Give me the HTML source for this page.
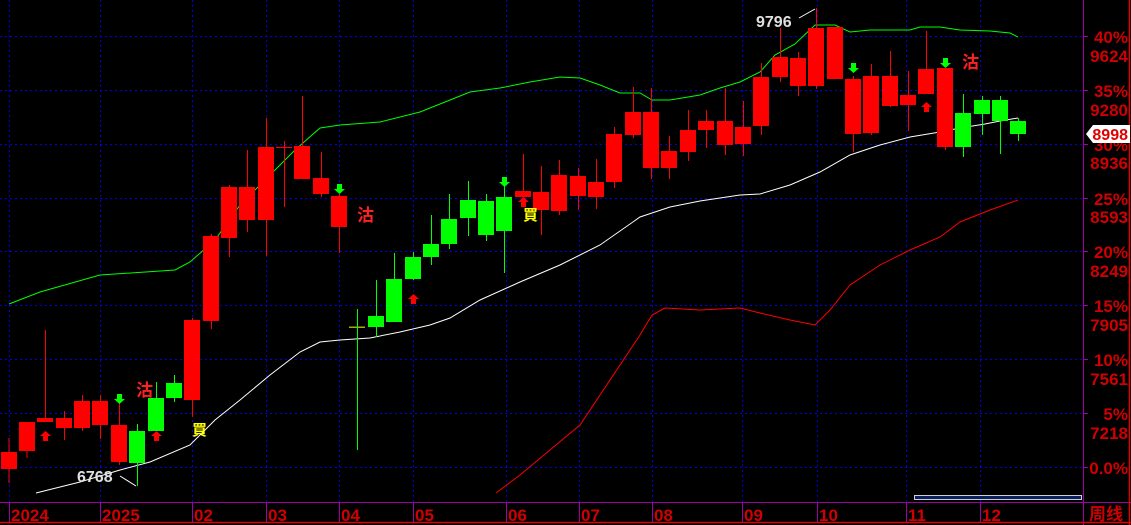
<!DOCTYPE html>
<html><head><meta charset="utf-8"><style>
html,body{margin:0;padding:0;background:#000;width:1131px;height:525px;overflow:hidden}
svg{display:block}
text{font-family:"Liberation Sans","Noto Sans CJK SC",sans-serif;font-weight:bold}
</style></head><body>
<svg width="1131" height="525" viewBox="0 0 1131 525" xmlns="http://www.w3.org/2000/svg">
<rect width="1131" height="525" fill="#000"/>
<g stroke="#0000e0" stroke-width="1" stroke-dasharray="2,3">
<line x1="0" y1="36.5" x2="1083" y2="36.5"/><line x1="0" y1="90.5" x2="1083" y2="90.5"/><line x1="0" y1="144.5" x2="1083" y2="144.5"/><line x1="0" y1="198.5" x2="1083" y2="198.5"/><line x1="0" y1="251.5" x2="1083" y2="251.5"/><line x1="0" y1="305.5" x2="1083" y2="305.5"/><line x1="0" y1="359.5" x2="1083" y2="359.5"/><line x1="0" y1="413.5" x2="1083" y2="413.5"/><line x1="0" y1="467.5" x2="1083" y2="467.5"/>
<line x1="9.5" y1="0" x2="9.5" y2="502"/><line x1="100.5" y1="0" x2="100.5" y2="502"/><line x1="192.5" y1="0" x2="192.5" y2="502"/><line x1="266.5" y1="0" x2="266.5" y2="502"/><line x1="339.5" y1="0" x2="339.5" y2="502"/><line x1="413.5" y1="0" x2="413.5" y2="502"/><line x1="506.5" y1="0" x2="506.5" y2="502"/><line x1="579.5" y1="0" x2="579.5" y2="502"/><line x1="652.5" y1="0" x2="652.5" y2="502"/><line x1="742.5" y1="0" x2="742.5" y2="502"/><line x1="817.5" y1="0" x2="817.5" y2="502"/><line x1="906.5" y1="0" x2="906.5" y2="502"/><line x1="980.5" y1="0" x2="980.5" y2="502"/>
</g>
<polyline fill="none" stroke="#00ff00" stroke-width="1" points="9,304 40,292 100,275 175,270 190,262 215,240 240,205 270,175 295,150 320,128 340,125 380,122 420,112 450,100 470,92 500,88 530,82 560,77 580,78 600,85 620,93 640,93 652,100 670,100 700,95 720,88 740,82 760,72 775,55 795,44 815,25 835,25 850,32 870,30 910,30 920,27 940,27 960,30 990,31 1010,33 1018,37"/>
<polyline fill="none" stroke="#ffffff" stroke-width="1" points="36,493 80,482 120,470 150,462 190,445 215,420 240,400 270,375 300,352 320,342 340,340 370,338 400,332 430,325 450,318 480,300 520,282 560,265 600,245 640,217 670,207 700,201 740,195 760,194 790,185 820,172 850,155 880,145 910,137 940,132 960,128 985,124 1000,121 1018,118"/>
<polyline fill="none" stroke="#ff0000" stroke-width="1" points="496,493 520,475 550,450 580,425 600,395 620,365 640,335 652,315 665,308 700,310 740,308 760,313 790,320 815,325 830,310 850,285 880,265 910,250 940,237 960,222 990,210 1018,200"/>
<g fill="#ff0000" stroke="#ff0000">
<line x1="9" y1="438" x2="9" y2="483"/><rect x="1" y="452" width="16" height="17" stroke="none"/>
<line x1="27" y1="422" x2="27" y2="458"/><rect x="19" y="422" width="16" height="29" stroke="none"/>
<line x1="45.5" y1="330" x2="45.5" y2="422"/><rect x="37" y="418" width="16" height="4" stroke="none"/>
<line x1="64.5" y1="411" x2="64.5" y2="440"/><rect x="56" y="418" width="16" height="10" stroke="none"/>
<line x1="82.5" y1="395" x2="82.5" y2="431"/><rect x="74" y="401" width="16" height="27" stroke="none"/>
<line x1="100.5" y1="395" x2="100.5" y2="439"/><rect x="92" y="401" width="16" height="24" stroke="none"/>
<line x1="119.5" y1="395" x2="119.5" y2="465"/><rect x="111" y="425" width="16" height="37" stroke="none"/>
<line x1="192.5" y1="318" x2="192.5" y2="417"/><rect x="184" y="320" width="16" height="80" stroke="none"/>
<line x1="211.5" y1="234" x2="211.5" y2="329"/><rect x="203" y="236" width="16" height="85" stroke="none"/>
<line x1="229.5" y1="185" x2="229.5" y2="257"/><rect x="221" y="187" width="16" height="51" stroke="none"/>
<line x1="247.5" y1="150" x2="247.5" y2="232"/><rect x="239" y="187" width="16" height="33" stroke="none"/>
<line x1="266.5" y1="118" x2="266.5" y2="256"/><rect x="258" y="147" width="16" height="73" stroke="none"/>
<line x1="284.5" y1="141" x2="284.5" y2="207"/><rect x="276" y="147" width="16" height="1" stroke="none"/>
<line x1="302.5" y1="96" x2="302.5" y2="179"/><rect x="294" y="146" width="16" height="33" stroke="none"/>
<line x1="321.5" y1="152" x2="321.5" y2="197"/><rect x="313" y="178" width="16" height="16" stroke="none"/>
<line x1="339.5" y1="194" x2="339.5" y2="253"/><rect x="331" y="196" width="16" height="31" stroke="none"/>
<rect x="349" y="326" width="16" height="2" stroke="none"/>
<line x1="523.5" y1="154" x2="523.5" y2="198"/><rect x="515" y="191" width="16" height="6" stroke="none"/>
<line x1="541.5" y1="166" x2="541.5" y2="235"/><rect x="533" y="192" width="16" height="18" stroke="none"/>
<line x1="559.5" y1="160" x2="559.5" y2="215"/><rect x="551" y="175" width="16" height="36" stroke="none"/>
<line x1="578.5" y1="168" x2="578.5" y2="210"/><rect x="570" y="176" width="16" height="20" stroke="none"/>
<line x1="596.5" y1="159" x2="596.5" y2="209"/><rect x="588" y="182" width="16" height="15" stroke="none"/>
<line x1="614.5" y1="127" x2="614.5" y2="188"/><rect x="606" y="134" width="16" height="48" stroke="none"/>
<line x1="633.5" y1="87" x2="633.5" y2="138"/><rect x="625" y="112" width="16" height="23" stroke="none"/>
<line x1="651.5" y1="88" x2="651.5" y2="179"/><rect x="643" y="112" width="16" height="56" stroke="none"/>
<line x1="669.5" y1="136" x2="669.5" y2="179"/><rect x="661" y="151" width="16" height="17" stroke="none"/>
<line x1="688.5" y1="110" x2="688.5" y2="161"/><rect x="680" y="130" width="16" height="22" stroke="none"/>
<line x1="706.5" y1="110" x2="706.5" y2="148"/><rect x="698" y="121" width="16" height="9" stroke="none"/>
<line x1="725.5" y1="88" x2="725.5" y2="155"/><rect x="717" y="121" width="16" height="24" stroke="none"/>
<line x1="743.5" y1="101" x2="743.5" y2="156"/><rect x="735" y="127" width="16" height="17" stroke="none"/>
<line x1="761.5" y1="63" x2="761.5" y2="135"/><rect x="753" y="77" width="16" height="49" stroke="none"/>
<line x1="780.5" y1="28" x2="780.5" y2="82"/><rect x="772" y="57" width="16" height="20" stroke="none"/>
<line x1="798.5" y1="52" x2="798.5" y2="96"/><rect x="790" y="58" width="16" height="28" stroke="none"/>
<line x1="816.5" y1="8" x2="816.5" y2="89"/><rect x="808" y="28" width="16" height="58" stroke="none"/>
<line x1="835.5" y1="27" x2="835.5" y2="79"/><rect x="827" y="27" width="16" height="52" stroke="none"/>
<line x1="853.5" y1="76" x2="853.5" y2="152"/><rect x="845" y="79" width="16" height="55" stroke="none"/>
<line x1="871.5" y1="64" x2="871.5" y2="135"/><rect x="863" y="76" width="16" height="57" stroke="none"/>
<line x1="890.5" y1="51" x2="890.5" y2="107"/><rect x="882" y="76" width="16" height="30" stroke="none"/>
<line x1="908.5" y1="71" x2="908.5" y2="131"/><rect x="900" y="95" width="16" height="10" stroke="none"/>
<line x1="926.5" y1="31" x2="926.5" y2="94"/><rect x="918" y="69" width="16" height="25" stroke="none"/>
<line x1="945.5" y1="68" x2="945.5" y2="150"/><rect x="937" y="68" width="16" height="79" stroke="none"/>
</g>
<g fill="#00ff00" stroke="#00ff00">
<line x1="137.5" y1="424" x2="137.5" y2="486"/><rect x="129" y="431" width="16" height="32" stroke="none"/>
<line x1="156.5" y1="382" x2="156.5" y2="431"/><rect x="148" y="398" width="16" height="33" stroke="none"/>
<line x1="174.5" y1="375" x2="174.5" y2="402"/><rect x="166" y="383" width="16" height="15" stroke="none"/>
<line x1="357.5" y1="309" x2="357.5" y2="450"/>
<line x1="376.5" y1="280" x2="376.5" y2="337"/><rect x="368" y="316" width="16" height="11" stroke="none"/>
<line x1="394.5" y1="253" x2="394.5" y2="322"/><rect x="386" y="279" width="16" height="43" stroke="none"/>
<line x1="413.5" y1="252" x2="413.5" y2="280"/><rect x="405" y="257" width="16" height="22" stroke="none"/>
<line x1="431.5" y1="215" x2="431.5" y2="265"/><rect x="423" y="244" width="16" height="13" stroke="none"/>
<line x1="449.5" y1="194" x2="449.5" y2="249"/><rect x="441" y="219" width="16" height="25" stroke="none"/>
<line x1="468.5" y1="181" x2="468.5" y2="236"/><rect x="460" y="200" width="16" height="18" stroke="none"/>
<line x1="486.5" y1="194" x2="486.5" y2="241"/><rect x="478" y="201" width="16" height="34" stroke="none"/>
<line x1="504.5" y1="180" x2="504.5" y2="273"/><rect x="496" y="197" width="16" height="34" stroke="none"/>
<line x1="963.5" y1="94" x2="963.5" y2="157"/><rect x="955" y="113" width="16" height="34" stroke="none"/>
<line x1="982.5" y1="96" x2="982.5" y2="135"/><rect x="974" y="100" width="16" height="14" stroke="none"/>
<line x1="1000.5" y1="96" x2="1000.5" y2="154"/><rect x="992" y="100" width="16" height="21" stroke="none"/>
<line x1="1018.5" y1="118" x2="1018.5" y2="141"/><rect x="1010" y="121" width="16" height="13" stroke="none"/>
</g>
<rect x="349" y="327" width="16" height="1" fill="#00ff00"/>
<g fill="#00ff00">
<path d="M117,394h5v5h3l-5.5,5l-5.5,-5h3z"/><path d="M337,184h5v5h3l-5.5,5l-5.5,-5h3z"/><path d="M502,177h5v5h3l-5.5,5l-5.5,-5h3z"/><path d="M851,63h5v5h3l-5.5,5l-5.5,-5h3z"/><path d="M943,58h5v5h3l-5.5,5l-5.5,-5h3z"/>
</g>
<g fill="#ff0000">
<path d="M43,441h5v-5h3l-5.5,-5l-5.5,5h3z"/><path d="M154,441h5v-5h3l-5.5,-5l-5.5,5h3z"/><path d="M411,304h5v-5h3l-5.5,-5l-5.5,5h3z"/><path d="M521,207h5v-5h3l-5.5,-5l-5.5,5h3z"/><path d="M924,112h5v-5h3l-5.5,-5l-5.5,5h3z"/>
</g>
<g font-size="17" fill="#ff2020">
<text x="136" y="396">沽</text><text x="357" y="221">沽</text><text x="962" y="68">沽</text>
</g>
<g font-size="15" fill="#ffff00"><text x="192" y="435">買</text><text x="523" y="220">買</text></g>
<text x="756" y="27" font-size="16" fill="#e0e0e0">9796</text>
<line x1="799" y1="18" x2="815" y2="9" stroke="#fff" stroke-width="1"/>
<text x="77" y="482" font-size="16" fill="#e0e0e0">6768</text>
<line x1="120" y1="476" x2="136" y2="486" stroke="#fff" stroke-width="1"/>
<rect x="914.5" y="495.5" width="167" height="4" fill="#0a1f60" stroke="#d0d0d0" stroke-width="1"/>
<line x1="1083.5" y1="0" x2="1083.5" y2="525" stroke="#a000a0"/>
<line x1="0" y1="502.5" x2="1131" y2="502.5" stroke="#a000a0"/>
<line x1="0" y1="522.5" x2="1131" y2="522.5" stroke="#e00000" stroke-width="1.5"/>
<line x1="1129.5" y1="0" x2="1129.5" y2="525" stroke="#e00000" stroke-width="1.5"/>
<g stroke="#a000a0">
<line x1="1083" y1="36.5" x2="1088" y2="36.5"/><line x1="1083" y1="90.5" x2="1088" y2="90.5"/><line x1="1083" y1="144.5" x2="1088" y2="144.5"/><line x1="1083" y1="198.5" x2="1088" y2="198.5"/><line x1="1083" y1="251.5" x2="1088" y2="251.5"/><line x1="1083" y1="305.5" x2="1088" y2="305.5"/><line x1="1083" y1="359.5" x2="1088" y2="359.5"/><line x1="1083" y1="413.5" x2="1088" y2="413.5"/><line x1="1083" y1="467.5" x2="1088" y2="467.5"/>
<line x1="9.5" y1="502" x2="9.5" y2="522"/><line x1="100.5" y1="502" x2="100.5" y2="522"/><line x1="192.5" y1="502" x2="192.5" y2="522"/><line x1="266.5" y1="502" x2="266.5" y2="522"/><line x1="339.5" y1="502" x2="339.5" y2="522"/><line x1="413.5" y1="502" x2="413.5" y2="522"/><line x1="506.5" y1="502" x2="506.5" y2="522"/><line x1="579.5" y1="502" x2="579.5" y2="522"/><line x1="652.5" y1="502" x2="652.5" y2="522"/><line x1="742.5" y1="502" x2="742.5" y2="522"/><line x1="817.5" y1="502" x2="817.5" y2="522"/><line x1="906.5" y1="502" x2="906.5" y2="522"/><line x1="980.5" y1="502" x2="980.5" y2="522"/>
</g>
<g font-size="17" fill="#d00000" text-anchor="end">
<text x="1128" y="43">40%</text><text x="1128" y="62">9624</text>
<text x="1128" y="97">35%</text><text x="1128" y="116">9280</text>
<text x="1128" y="151">30%</text><text x="1128" y="169">8936</text>
<text x="1128" y="205">25%</text><text x="1128" y="223">8593</text>
<text x="1128" y="258">20%</text><text x="1128" y="277">8249</text>
<text x="1128" y="312">15%</text><text x="1128" y="331">7905</text>
<text x="1128" y="366">10%</text><text x="1128" y="385">7561</text>
<text x="1128" y="420">5%</text><text x="1128" y="439">7218</text>
<text x="1128" y="474">0.0%</text>
</g>
<path d="M1086,134 L1093,125 H1130 V143 H1093 Z" fill="#fff"/>
<text x="1128" y="140" font-size="16" fill="#e00000" text-anchor="end">8998</text>
<g font-size="17" fill="#d00000">
<text x="11" y="521">2024</text><text x="102" y="521">2025</text><text x="194" y="521">02</text><text x="268" y="521">03</text><text x="341" y="521">04</text><text x="415" y="521">05</text><text x="508" y="521">06</text><text x="581" y="521">07</text><text x="654" y="521">08</text><text x="744" y="521">09</text><text x="819" y="521">10</text><text x="908" y="521">11</text><text x="982" y="521">12</text>
<text x="1089" y="520" font-weight="normal">周线</text>
</g>
</svg>
</body></html>
